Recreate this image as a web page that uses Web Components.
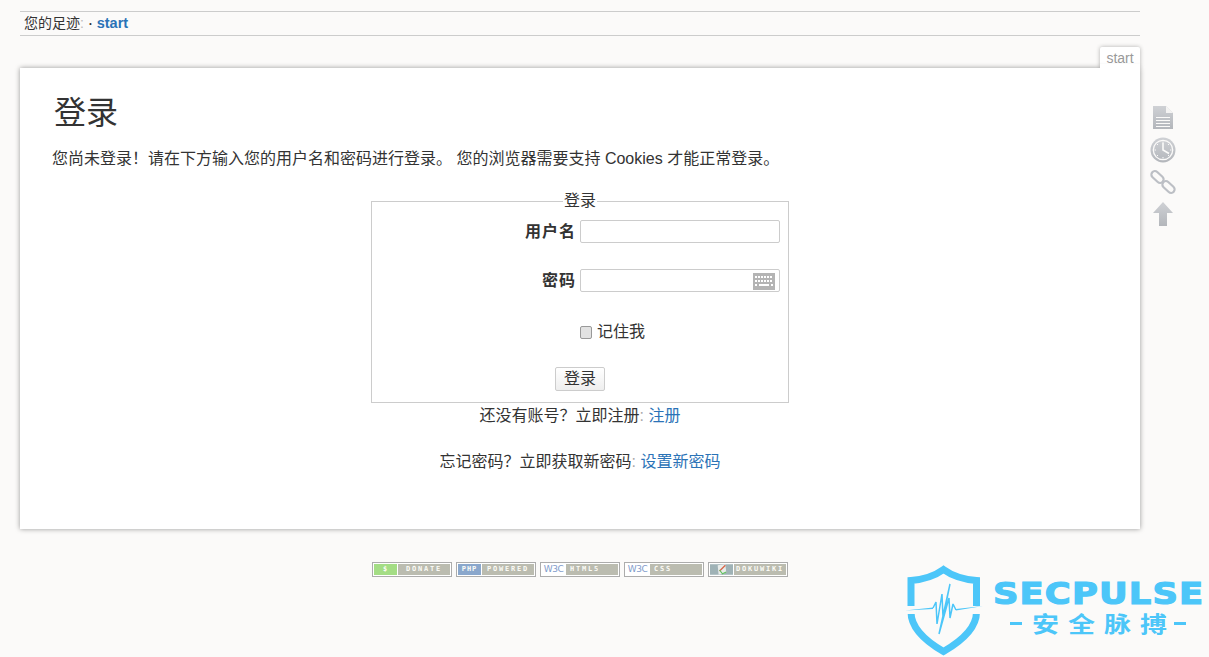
<!DOCTYPE html>
<html lang="zh">
<head>
<meta charset="utf-8">
<title>登录</title>
<style>
  html, body { margin: 0; height: 100%; }
  body {
    background: #fbfaf9;
    color: #333;
    font: 16px/20px "Liberation Sans", "Noto Sans CJK SC", sans-serif;
    overflow: hidden;
    position: relative;
  }
</style>
</head>
<body>
<wiki-page>
  <wiki-trace slot="trace"></wiki-trace>
  <wiki-tools slot="tools"></wiki-tools>
  <h1 slot="title">登录</h1>
  <p slot="intro">您尚未登录！请在下方输入您的用户名和密码进行登录。 您的浏览器需要支持 Cookies 才能正常登录。</p>
  <login-form></login-form>
  <wiki-badge slot="footer" color="#a4dd85" head="$">DONATE</wiki-badge>
  <wiki-badge slot="footer" color="#8aa7cc" head="PHP">POWERED</wiki-badge>
  <wiki-badge slot="footer" w3c left>HTML5</wiki-badge>
  <wiki-badge slot="footer" w3c left>CSS</wiki-badge>
  <wiki-badge slot="footer" doku>DOKUWIKI</wiki-badge>
</wiki-page>
<sec-watermark></sec-watermark>

<script>
const LINK = '#2b73b7'

class WikiPage extends HTMLElement {
  constructor() {
    super()
    this.attachShadow({ mode: 'open' }).innerHTML = `
      <style>
        :host { display: block; width: 1120px; padding: 11px 0 0 20px; }
        .row { display: flex; align-items: flex-start; }
        .main { width: 1120px; flex: none; }
        .tabs { display: flex; justify-content: flex-end; height: 21px; margin-top: 11px; }
        .tab {
          width: 40px; height: 21px; box-sizing: border-box;
          background: #fff; color: #999; font-size: 14px; line-height: 23px; text-align: center;
          border-radius: 2px 2px 0 0;
          box-shadow: 0 0 4px rgba(0,0,0,.3);
        }
        .card {
          height: 461px; box-sizing: border-box; padding: 25px 33px 0;
          background: #fff;
          box-shadow: 0 0 5px rgba(0,0,0,.4);
          position: relative;
        }
        .tabcover { height: 4px; width: 40px; background: #fff; position: absolute; right: 0; top: -4px; }
        ::slotted(h1) { margin: 0 0 0 1px; font-size: 32px; line-height: 40px; font-weight: 400; color: #333; }
        ::slotted(p) { margin: 15px 0 0 -1px; font-size: 16px; line-height: 22px; }
        .tools { margin: 66px 0 0 7px; }
        .footer { display: flex; justify-content: center; gap: 4px; margin-top: 33px; }
      </style>
      <slot name="trace"></slot>
      <div class="row">
        <div class="main">
          <div class="tabs"><div class="tab">start</div></div>
          <div class="card">
            <div class="tabcover"></div>
            <slot name="title"></slot>
            <slot name="intro"></slot>
            <slot></slot>
          </div>
          <div class="footer"><slot name="footer"></slot></div>
        </div>
        <div class="tools"><slot name="tools"></slot></div>
      </div>
    `
  }
}

class WikiTrace extends HTMLElement {
  constructor() {
    super()
    this.attachShadow({ mode: 'open' }).innerHTML = `
      <style>
        :host {
          display: block; height: 23px; padding-left: 4px;
          border-top: 1px solid #ccc; border-bottom: 1px solid #ccc;
          font-size: 14px; line-height: 23px; color: #333;
        }
        b { color: ${LINK}; font-size: 14.5px; }
        i { font-style: normal; color: #bbb; }
        span { color: #333; margin: 0 0 0 1px; font-weight: 700; font-size: 12px; }
      </style>
      您的足迹<i>:</i> <span>·</span> <b>start</b>
    `
  }
}

class WikiTools extends HTMLElement {
  constructor() {
    super()
    this.attachShadow({ mode: 'open' }).innerHTML = `
      <style>
        :host { display: flex; flex-direction: column; width: 32px; }
        svg { display: block; width: 32px; height: 32px; }
      </style>
      <svg viewBox="0 0 32 32">
        <defs>
          <linearGradient id="g" x1="0" y1="0" x2="0" y2="1"><stop offset="0" stop-color="#cfd1d5"/><stop offset="1" stop-color="#b3b6bb"/></linearGradient>
        </defs>
        <path fill="url(#g)" d="M6 4h13l7 7v16H6z"/>
        <path fill="#fbfaf9" d="M19 4l7 7h-7z" opacity=".85"/>
        <path stroke="#fbfaf9" stroke-width="1.2" d="M9 15.5h14M9 18.5h14M9 21.5h14M9 24.5h14"/>
      </svg>
      <svg viewBox="0 0 32 32">
        <circle cx="16" cy="16" r="12.5" fill="url(#g)"/>
        <circle cx="16" cy="16" r="9.7" fill="none" stroke="#fbfaf9" stroke-width="1.3"/>
        <path stroke="#fbfaf9" stroke-width="1.6" fill="none" d="M16 9v7l6 3.5"/>
        <path stroke="#fbfaf9" stroke-width="1" d="M16 7.5v1.5M16 23v1.5M7.5 16H9M23 16h1.5M10 10l1 1M21 21l1 1M22 10l-1 1M10 22l1-1"/>
      </svg>
      <svg viewBox="0 0 32 32" fill="none" stroke="#bcbfc5" stroke-width="2.2">
        <rect x="3.5" y="7.5" width="14" height="7" rx="3.5" transform="rotate(42 10.5 11)"/>
        <rect x="14.5" y="17.5" width="14" height="7" rx="3.5" transform="rotate(42 21.5 21)"/>
      </svg>
      <svg viewBox="0 0 32 32"><path fill="url(#g)" d="M16 4l10 11h-6v13h-8V15H6z"/></svg>
    `
  }
}

class LoginForm extends HTMLElement {
  constructor() {
    super()
    this.attachShadow({ mode: 'open' }).innerHTML = `
      <style>
        :host { display: block; text-align: center; font-size: 16px; line-height: 22px; }
        fieldset {
          width: 418px; height: 212px; box-sizing: border-box; margin: 21px auto 0;
          padding: 9px 8px 0; border: 1px solid #ccc; text-align: left;
          position: relative;
        }
        legend { padding: 0 1px; margin: 0 auto; line-height: 20px; height: 20px; text-align: center; }
        .grid { display: grid; grid-template-columns: 1fr 200px; column-gap: 4px; }
        label.name { font-weight: 700; text-align: right; line-height: 23px; height: 23px; margin-bottom: 26px; letter-spacing: 1px; }
        .box { position: relative; height: 23px; margin-bottom: 26px; }
        input.text {
          display: block; width: 100%; height: 23px; box-sizing: border-box; margin: 0; padding: 0 4px;
          border: 1px solid #ccc; border-radius: 2px; background: #fff;
        }
        svg { position: absolute; right: 5px; top: 4px; width: 22px; height: 17px; }
        .check { grid-column: 2; display: flex; align-items: center; height: 22px; margin-top: 3px; }
        .check input {
          appearance: none; box-sizing: border-box; width: 12px; height: 13px; margin: 0 5px 0 0;
          border: 1px solid #999; border-radius: 2px; background: #e2e2e2;
        }
        button {
          display: block; width: 50px; height: 24px; margin: 24px auto 0; padding: 0;
          border: 1px solid #ccc; border-radius: 2px; color: #333;
          background: linear-gradient(#fff, #eee);
          font: 16px/20px "Liberation Sans", "Noto Sans CJK SC", sans-serif;
        }
        p { margin: 0; height: 24px; line-height: 24px; }
        .reg { margin-top: 1px; }
        .forgot { margin-top: 22px; }
        a { color: ${LINK}; text-decoration: none; }
        i { font-style: normal; color: #aaa; }
      </style>
      <fieldset>
        <legend>登录</legend>
        <div class="grid">
          <label class="name">用户名</label>
          <div class="box"><input class="text" type="text"></div>
          <label class="name">密码</label>
          <div class="box">
            <input class="text" type="password">
            <svg viewBox="0 0 22 17">
              <rect width="22" height="17" fill="#b4b4b4"/>
              <path stroke="#fff" stroke-width="2" stroke-dasharray="2 1" d="M2 4h18M2 8h18"/>
              <path stroke="#fff" stroke-width="2" d="M2 12h2M6 12h10M18 12h2"/>
            </svg>
          </div>
          <label class="check"><input type="checkbox">记住我</label>
        </div>
        <button type="button">登录</button>
      </fieldset>
      <p class="reg">还没有账号？立即注册<i>:</i> <a href="#">注册</a></p>
      <p class="forgot">忘记密码？立即获取新密码<i>:</i> <a href="#">设置新密码</a></p>
    `
  }
}

class WikiBadge extends HTMLElement {
  constructor() {
    super()
    const root = this.attachShadow({ mode: 'open' })
    const head = this.getAttribute('head') || ''
    const isW3c = this.hasAttribute('w3c')
    const isDoku = this.hasAttribute('doku')
    let left = head
    if (isW3c) left = '<em>W3C</em>'
    if (isDoku) left = `<svg viewBox="0 0 24 11" width="24" height="11">
        <rect width="24" height="11" fill="#9fb2b6"/>
        <path d="M8 1l8-1 1 9-8 2z" fill="#e8ecea"/>
        <path d="M10 7l6-6" stroke="#d9654a" stroke-width="1.4"/>
        <path d="M10 6l3 4 4-2" stroke="#62c05f" stroke-width="1.2" fill="none"/>
      </svg>`
    root.innerHTML = `
      <style>
        :host {
          display: flex; flex: none; width: 80px; height: 15px; box-sizing: border-box;
          border: 1px solid #acacac; background: #fff; padding: 1px; gap: 1px;
          font: 700 7px/11px "DejaVu Sans Mono", monospace; color: #fbfbf6;
        }
        .head {
          width: 23px; flex: none; display: flex; align-items: center; justify-content: center;
          background: ${this.getAttribute('color') || '#fff'}; letter-spacing: 1px; overflow: hidden;
        }
        em { font: 400 9px/11px "DejaVu Sans", sans-serif; color: #7f9ccb; letter-spacing: -.5px; }
        .label {
          flex: 1; background: #bbbcb0; letter-spacing: 1.8px; white-space: nowrap;
          display: flex; align-items: center; justify-content: ${this.hasAttribute('left') ? 'flex-start' : 'center'};
          padding-left: ${this.hasAttribute('left') ? '4px' : '0'};
        }
      </style>
      <div class="head">${left}</div>
      <div class="label"><slot></slot></div>
    `
  }
}

class SecWatermark extends HTMLElement {
  constructor() {
    super()
    this.attachShadow({ mode: 'open' }).innerHTML = `
      <style>
        :host {
          display: block; position: absolute; left: 900px; top: 560px; width: 309px; height: 97px;
          color: #4cc6f9; overflow: hidden;
        }
        svg { position: absolute; left: 0; top: 0; width: 90px; height: 97px; }
        .en {
          position: absolute; left: 93px; top: 19px; white-space: nowrap;
          font: 700 31px/28px "DejaVu Sans", sans-serif; letter-spacing: 1px;
          -webkit-text-stroke: 1.2px #4cc6f9;
          transform: scaleX(1.14); transform-origin: left center;
        }
        .cn {
          position: absolute; left: 110px; top: 51px; display: flex; align-items: center; white-space: nowrap;
          font: 700 27px/24px "Noto Sans CJK SC", sans-serif; letter-spacing: 9px;
        }
        .dash { width: 12px; height: 3px; background: #4cc6f9; flex: none; }
        .cn span { margin: 0 -2px 0 10px; transform: scaleY(.8); }
      </style>
      <svg viewBox="0 0 90 97">
        <path fill="none" stroke="#4cc6f9" stroke-width="7" stroke-linejoin="miter"
          d="M43.500 9.500C36 15 23 19.500 11 20.500V52C11 68 27 82 43.500 91.500C60 82 76.500 68 76.500 52V20.500C64 19.500 51 15 43.500 9.500Z"/>
        <path fill="#fbfaf9" d="M3 46h84v8H3z"/>
        <path fill="#4cc6f9" d="M5 50.500l28-3v1.500zM83 46l-27 3v1.500z"/>
        <path fill="none" stroke="#4cc6f9" stroke-width="1.500" stroke-linejoin="bevel"
          d="M33 48L36 42L37 64L42 34L43 58L50 24L39 74L49 38L50 58L53 44L56 50"/>
      </svg>
      <div class="en">SECPULSE</div>
      <div class="cn"><i class="dash"></i><span>安全脉搏</span><i class="dash"></i></div>
    `
  }
}

customElements.define('wiki-page', WikiPage)
customElements.define('wiki-trace', WikiTrace)
customElements.define('wiki-tools', WikiTools)
customElements.define('login-form', LoginForm)
customElements.define('wiki-badge', WikiBadge)
customElements.define('sec-watermark', SecWatermark)
</script>
</body>
</html>
